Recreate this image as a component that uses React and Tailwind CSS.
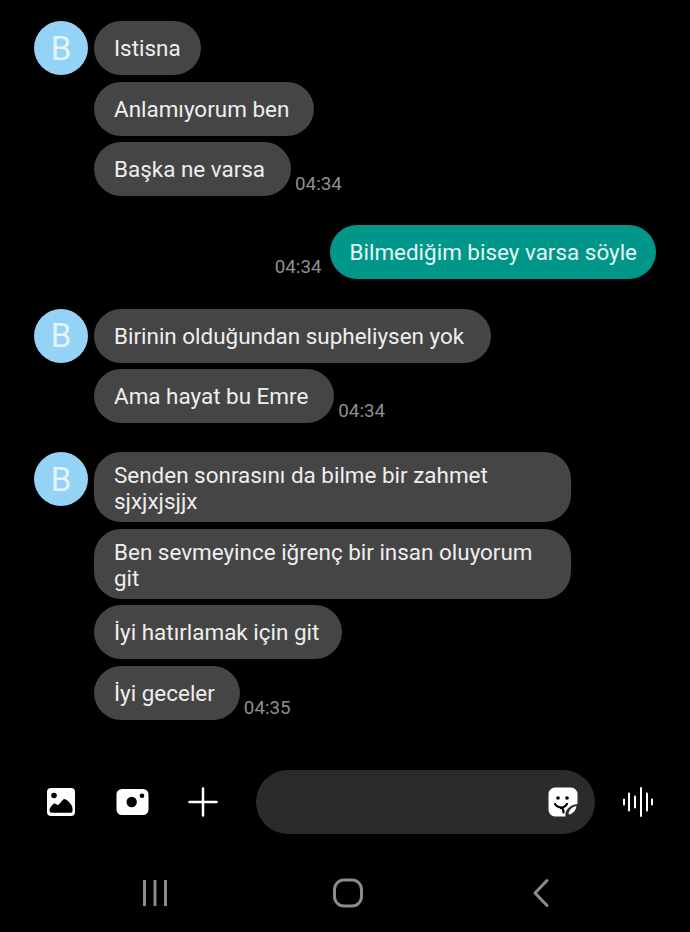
import React from "react";

const font = { fontFamily: "Roboto, sans-serif" };

function Bubble({ children, wide, time, pr }) {
  return (
    <div className="flex items-end">
      <div className={`rounded-[27px] bg-[#454545] pl-5 text-[22.45px] leading-[26px] text-[#eeeeee] ${wide ? "w-[477px] pr-5 pt-[10px] pb-2" : `py-[14px] ${pr || "pr-5"}`}`}>
        {children}
      </div>
      {time && <span className="ml-1 mb-[1px] text-[18.8px] leading-[22px] text-[#8f8f8f]">{time}</span>}
    </div>
  );
}

function Group({ children, className }) {
  return (
    <div className={`flex pl-[34px] ${className}`}>
      <div className="flex h-[54px] w-[54px] shrink-0 items-center justify-center rounded-full bg-[#94d3f5] text-[33px] leading-none text-[#e3f4fc]">B</div>
      <div className="ml-[6px] flex flex-col items-start gap-[6.5px]">{children}</div>
    </div>
  );
}

const ImageIcon = () => (
  <svg width="30" height="30" viewBox="0 0 30 30">
    <rect x="1" y="1" width="28" height="28" rx="4" fill="#fff" />
    <circle cx="8" cy="8.500" r="2.800" fill="#000" />
    <path d="M3.500 23.500c0-2.500 3-6.500 5-7 1.500 0 2.500 1.500 3.500 1.500 2-1 4.500-6 6.500-6 3 .5 8 6 8 9.500v2.500c0 1-1 1.800-2 1.800H5.500c-1.500 0-2-1-2-2.800z" fill="#000" />
  </svg>
);
const CameraIcon = () => (
  <svg width="34" height="28" viewBox="0 0 34 28">
    <rect x="1.500" y="1" width="32" height="26" rx="5.500" fill="#fff" />
    <circle cx="16.700" cy="14" r="5.200" fill="#000" />
    <circle cx="27" cy="7.700" r="2.300" fill="#000" />
  </svg>
);
const PlusIcon = () => (
  <svg width="30" height="30" viewBox="0 0 30 30" stroke="#fff" strokeWidth="2.500" strokeLinecap="round">
    <path d="M15 1.500v27M1.500 15h27" />
  </svg>
);
const StickerIcon = () => (
  <svg width="30" height="30" viewBox="0 0 30 30">
    <path d="M7 .5h16a6.500 6.500 0 0 1 6.500 6.500v11L18 29.500H7A6.500 6.500 0 0 1 .5 23V7A6.500 6.500 0 0 1 7 .5z" fill="#fff" />
    <circle cx="10" cy="11" r="1.800" fill="#000" />
    <circle cx="19" cy="11" r="1.800" fill="#000" />
    <path d="M7 17c1.500 2.500 4 3.500 7 3.500 1 1.500 1.500 3 1.500 5" fill="none" stroke="#000" strokeWidth="2.200" strokeLinecap="round" />
    <path d="M13 21c3-.5 5-2.500 6-4" fill="none" stroke="#000" strokeWidth="2.200" strokeLinecap="round" />
    <path d="M17.500 30c-1-6 3-12 12.500-13v3L20 30z" fill="#2b2b2b" />
    <path d="M20.500 27c.5-4 3-7 8-8-.5 4-3 7-6.500 8.500z" fill="#fff" />
  </svg>
);
const WaveIcon = () => (
  <svg width="32" height="30" viewBox="0 0 32 30" stroke="#fff" strokeWidth="2" strokeLinecap="round">
    <path d="M2 12.500v5M7 6.500v17M13 9.500v11M19 1v28M25 6.500v17M30 12.500v5" />
  </svg>
);

export default function App() {
  return (
    <div className="flex h-[932px] w-[690px] flex-col overflow-hidden bg-black pt-[21px]" style={font}>
      <Group>
        <Bubble>Istisna</Bubble>
        <Bubble pr="pr-[25px]">Anlamıyorum ben</Bubble>
        <Bubble time="04:34" pr="pr-[26px]">Başka ne varsa</Bubble>
      </Group>

      <div className="mt-[29px] flex items-end justify-end pr-[34px]">
        <span className="mb-[1px] mr-2 text-[18.8px] leading-[22px] text-[#8f8f8f]">04:34</span>
        <div className="rounded-[27px] bg-[#00978a] py-[14px] pl-5 pr-[19px] text-[22.45px] leading-[26px] text-[#e6f5f3]">Bilmediğim bisey varsa söyle</div>
      </div>

      <Group className="mt-[29.5px]">
        <Bubble pr="pr-[27px]">Birinin olduğundan supheliysen yok</Bubble>
        <Bubble time="04:34" pr="pr-[26px]">Ama hayat bu Emre</Bubble>
      </Group>

      <Group className="mt-[29px]">
        <Bubble wide>Senden sonrasını da bilme bir zahmet<br />sjxjxjsjjx</Bubble>
        <Bubble wide>Ben sevmeyince iğrenç bir insan oluyorum<br />git</Bubble>
        <Bubble pr="pr-[23px]">İyi hatırlamak için git</Bubble>
        <Bubble time="04:35" pr="pr-[25px]">İyi geceler</Bubble>
      </Group>

      <div className="mt-[50px] flex h-16 items-center pl-[46px] pr-[36px]">
        <ImageIcon />
        <div className="ml-[39px]"><CameraIcon /></div>
        <div className="ml-[39px]"><PlusIcon /></div>
        <div className="ml-[38px] flex h-16 w-[339px] items-center justify-end rounded-[32px] bg-[#2b2b2b] pr-[17px]"><StickerIcon /></div>
        <div className="ml-[27px]"><WaveIcon /></div>
      </div>

      <div className="mt-[44px] flex items-center">
        <svg className="ml-[140px]" width="30" height="30" viewBox="0 0 30 30" stroke="#8c8c8c" strokeWidth="3">
          <path d="M4.500 2v26M15 2v26M25.500 2v26" />
        </svg>
        <svg className="ml-[163px]" width="30" height="30" viewBox="0 0 30 30" fill="none" stroke="#8c8c8c" strokeWidth="3">
          <rect x="1.500" y="2" width="27" height="26" rx="9.500" />
        </svg>
        <svg className="ml-[167px]" width="20" height="30" viewBox="0 0 20 30" fill="none" stroke="#8c8c8c" strokeWidth="3" strokeLinecap="round" strokeLinejoin="round">
          <path d="M17 2.500 5 15l12 12.500" />
        </svg>
      </div>
    </div>
  );
}
